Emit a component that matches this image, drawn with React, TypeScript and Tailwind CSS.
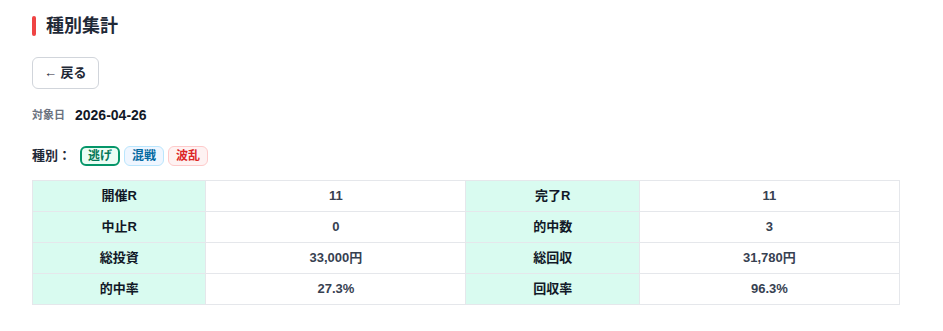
const rows = [
  ["開催R", "11", "完了R", "11"],
  ["中止R", "0", "的中数", "3"],
  ["総投資", "33,000円", "総回収", "31,780円"],
  ["的中率", "27.3%", "回収率", "96.3%"],
];

export default function App() {
  return (
    <div className="bg-white min-h-[331px] px-8 pt-[15px] text-[#1f2937] font-['Liberation_Sans','Noto_Sans_CJK_JP',sans-serif]">
      <div className="flex items-center gap-[10px] h-[22px]">
        <span className="w-1 h-[20px] rounded-sm bg-[#ef4444]"></span>
        <h1 className="text-[18px] font-bold text-[#1f2937]">種別集計</h1>
      </div>
      <button className="mt-[20px] h-[32px] px-[11px] border border-[#d1d5db] rounded-md text-[13px] font-bold text-[#1f2937] bg-white">
        ← 戻る
      </button>
      <div className="mt-[16px] flex items-center h-[20px]">
        <span className="text-[11px] font-bold text-[#6b7280]">対象日</span>
        <span className="ml-[10px] text-[14px] font-bold text-[#111827]">2026-04-26</span>
      </div>
      <div className="mt-[21px] flex items-center h-[20px]">
        <span className="text-[13px] font-bold text-[#1f2937] mr-[9px]">種別：</span>
        <div className="flex gap-[4px]">
          <span className="h-[20px] px-[6px] flex items-center rounded-md border-2 border-[#059669] bg-[#ecfdf5] text-[12px] font-bold text-[#047857]">逃げ</span>
          <span className="h-[20px] px-[7px] flex items-center rounded-md border border-[#bae6fd] bg-[#eff6ff] text-[12px] font-bold text-[#0369a1]">混戦</span>
          <span className="h-[20px] px-[7px] flex items-center rounded-md border border-[#fecaca] bg-[#fef2f2] text-[12px] font-bold text-[#dc2626]">波乱</span>
        </div>
      </div>
      <table className="mt-[14px] w-[868px] border-collapse table-fixed">
        <colgroup>
          <col className="w-[20%]" />
          <col className="w-[30%]" />
          <col className="w-[20%]" />
          <col className="w-[30%]" />
        </colgroup>
        <tbody>
          {rows.map((r) => (
            <tr key={r[0]} className="h-[31px]">
              <td className="border border-[#e5e7eb] bg-[#d9fbf0] text-center text-[13px] font-bold text-[#111827]">{r[0]}</td>
              <td className="border border-[#e5e7eb] text-center text-[13px] font-bold text-[#374151]">{r[1]}</td>
              <td className="border border-[#e5e7eb] bg-[#d9fbf0] text-center text-[13px] font-bold text-[#111827]">{r[2]}</td>
              <td className="border border-[#e5e7eb] text-center text-[13px] font-bold text-[#374151]">{r[3]}</td>
            </tr>
          ))}
        </tbody>
      </table>
    </div>
  );
}
